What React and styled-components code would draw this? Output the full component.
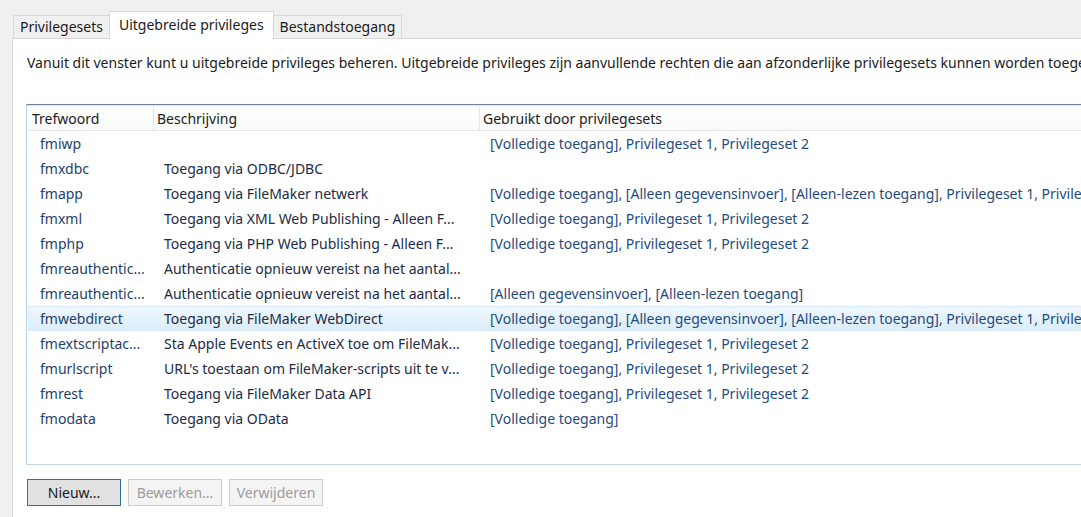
import React from 'react';
import styled, { createGlobalStyle } from 'styled-components';

const GlobalStyle = createGlobalStyle`
  html, body {
    margin: 0;
    padding: 0;
    background: #f0f0f0;
    overflow: hidden;
  }
  body {
    font-family: "Noto Sans", "Open Sans", sans-serif;
  }
`;

const rows = [
  { key: 'fmiwp', desc: '', used: '[Volledige toegang], Privilegeset 1, Privilegeset 2' },
  { key: 'fmxdbc', desc: 'Toegang via ODBC/JDBC', used: '' },
  {
    key: 'fmapp',
    desc: 'Toegang via FileMaker netwerk',
    used: '[Volledige toegang], [Alleen gegevensinvoer], [Alleen-lezen toegang], Privilegeset 1, Privilegeset 2',
  },
  { key: 'fmxml', desc: 'Toegang via XML Web Publishing - Alleen F...', used: '[Volledige toegang], Privilegeset 1, Privilegeset 2' },
  { key: 'fmphp', desc: 'Toegang via PHP Web Publishing - Alleen F...', used: '[Volledige toegang], Privilegeset 1, Privilegeset 2' },
  { key: 'fmreauthentic...', desc: 'Authenticatie opnieuw vereist na het aantal...', used: '' },
  { key: 'fmreauthentic...', desc: 'Authenticatie opnieuw vereist na het aantal...', used: '[Alleen gegevensinvoer], [Alleen-lezen toegang]' },
  {
    key: 'fmwebdirect',
    desc: 'Toegang via FileMaker WebDirect',
    used: '[Volledige toegang], [Alleen gegevensinvoer], [Alleen-lezen toegang], Privilegeset 1, Privilegeset 2',
    selected: true,
  },
  { key: 'fmextscriptac...', desc: 'Sta Apple Events en ActiveX toe om FileMak...', used: '[Volledige toegang], Privilegeset 1, Privilegeset 2' },
  { key: 'fmurlscript', desc: "URL's toestaan om FileMaker-scripts uit te v...", used: '[Volledige toegang], Privilegeset 1, Privilegeset 2' },
  { key: 'fmrest', desc: 'Toegang via FileMaker Data API', used: '[Volledige toegang], Privilegeset 1, Privilegeset 2' },
  { key: 'fmodata', desc: 'Toegang via OData', used: '[Volledige toegang]' },
];

const App = () => {
  return (
    <Page>
      <GlobalStyle />
      <TabBar>
        <Tab>Privilegesets</Tab>
        <Tab active>Uitgebreide privileges</Tab>
        <Tab>Bestandstoegang</Tab>
      </TabBar>
      <Panel>
        <Intro>
          Vanuit dit venster kunt u uitgebreide privileges beheren. Uitgebreide privileges zijn aanvullende rechten die aan
          afzonderlijke privilegesets kunnen worden toegekend.
        </Intro>
        <ListBox>
          <HeaderRow>
            <HeaderCell>Trefwoord</HeaderCell>
            <HeaderCell>Beschrijving</HeaderCell>
            <HeaderCell last>Gebruikt door privilegesets</HeaderCell>
          </HeaderRow>
          {rows.map((r, i) => (
            <Row key={i} selected={r.selected}>
              <KeyCell>{r.key}</KeyCell>
              <DescCell>{r.desc}</DescCell>
              <UsedCell>{r.used}</UsedCell>
            </Row>
          ))}
        </ListBox>
        <ButtonRow>
          <Button primary>Nieuw...</Button>
          <Button disabled>Bewerken...</Button>
          <Button disabled>Verwijderen</Button>
        </ButtonRow>
      </Panel>
    </Page>
  );
};

export default App;

const Page = styled.div`
  width: 1081px;
  height: 517px;
  box-sizing: border-box;
  padding: 11px 0 0 12px;
  overflow: hidden;
`;

const TabBar = styled.div`
  display: flex;
  align-items: flex-end;
  padding-left: 1px;
  height: 28px;
  position: relative;
  z-index: 1;
`;

const Tab = styled.div`
  box-sizing: border-box;
  height: ${(p) => (p.active ? '28px' : '24px')};
  padding: 0 ${(p) => (p.active ? '9px' : '6px')};
  margin: ${(p) => (p.active ? '0 -1px' : '0')};
  display: flex;
  align-items: center;
  padding-bottom: ${(p) => (p.active ? '3px' : '1px')};
  background: ${(p) => (p.active ? '#ffffff' : '#f0f0f0')};
  border: 1px solid #d9d9d9;
  border-bottom: ${(p) => (p.active ? 'none' : '1px solid #d9d9d9')};
  font-size: 14px;
  color: #1a1a1a;
  white-space: nowrap;
  position: relative;
  z-index: ${(p) => (p.active ? 2 : 0)};
`;

const Panel = styled.div`
  margin-top: -1px;
  background: #ffffff;
  border: 1px solid #d9d9d9;
  border-right: none;
  padding: 14px 0 0 13px;
  height: 490px;
  box-sizing: border-box;
`;

const Intro = styled.div`
  padding-left: 1px;
  font-size: 14px;
  line-height: 20px;
  color: #1a1a1a;
  white-space: nowrap;
`;

const ListBox = styled.div`
  margin-top: 31px;
  height: 361px;
  box-sizing: border-box;
  border-top: 1px solid #6f8399;
  border-left: 1px solid #b9d0e0;
  border-bottom: 1px solid #c3d6e2;
  overflow: hidden;
`;

const columns = '127px 326px 1fr';

const HeaderRow = styled.div`
  display: grid;
  grid-template-columns: ${columns};
  height: 26px;
  box-sizing: border-box;
  background: linear-gradient(#ffffff, #fafbfc);
  border-top: 1px solid #dbe8f3;
  border-bottom: 1px solid #e5e5e5;
`;

const HeaderCell = styled.div`
  display: flex;
  align-items: center;
  padding-left: ${(p) => (p.last ? '3px' : '5px')};
  border-right: ${(p) => (p.last ? 'none' : '1px solid #e5e5e5')};
  font-size: 14px;
  color: #1a1a1a;
  white-space: nowrap;
  &:nth-child(2) {
    padding-left: 3px;
  }
`;

const Row = styled.div`
  display: grid;
  grid-template-columns: ${columns};
  height: 25px;
  box-sizing: border-box;
  margin-left: 1px;
  border: 1px solid ${(p) => (p.selected ? '#d9ecf9' : 'transparent')};
  border-right: none;
  background: ${(p) => (p.selected ? 'linear-gradient(#eef7fd, #dcedf9)' : 'transparent')};
  font-size: 14px;
  white-space: nowrap;
`;

const Cell = styled.div`
  display: flex;
  align-items: center;
  overflow: hidden;
`;

const KeyCell = styled(Cell)`
  padding-left: 11px;
  color: #1e3f6b;
`;

const DescCell = styled(Cell)`
  padding-left: 8px;
  color: #1d2b45;
`;

const UsedCell = styled(Cell)`
  padding-left: 8px;
  color: #1f4a80;
`;

const ButtonRow = styled.div`
  display: flex;
  gap: 7px;
  margin-top: 14px;
  padding-left: 1px;
`;

const Button = styled.button`
  width: 94px;
  height: 27px;
  box-sizing: border-box;
  font-family: "Noto Sans", "Open Sans", sans-serif;
  font-size: 14px;
  padding: 0;
  background: ${(p) => (p.primary ? '#e1e1e1' : '#f4f4f4')};
  border: 1px solid ${(p) => (p.primary ? '#2f6fa8' : '#cccccc')};
  color: ${(p) => (p.disabled ? '#9c9c9c' : '#1a1a1a')};
`;
